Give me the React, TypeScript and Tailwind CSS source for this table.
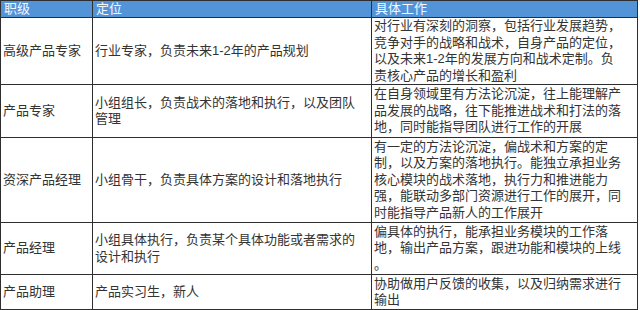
const rows = [
  {
    level: '高级产品专家',
    role: ['行业专家，负责未来1-2年的产品规划'],
    work: [
      '对行业有深刻的洞察，包括行业发展趋势，',
      '竞争对手的战略和战术，自身产品的定位，',
      '以及未来1-2年的发展方向和战术定制。负',
      '责核心产品的增长和盈利',
    ],
  },
  {
    level: '产品专家',
    role: ['小组组长，负责战术的落地和执行，以及团队', '管理'],
    work: [
      '在自身领域里有方法论沉淀，往上能理解产',
      '品发展的战略，往下能推进战术和打法的落',
      '地，同时能指导团队进行工作的开展',
    ],
  },
  {
    level: '资深产品经理',
    role: ['小组骨干，负责具体方案的设计和落地执行'],
    work: [
      '有一定的方法论沉淀，偏战术和方案的定',
      '制，以及方案的落地执行。能独立承担业务',
      '核心模块的战术落地，执行力和推进能力',
      '强，能联动多部门资源进行工作的展开，同',
      '时能指导产品新人的工作展开',
    ],
  },
  {
    level: '产品经理',
    role: ['小组具体执行，负责某个具体功能或者需求的', '设计和执行'],
    work: [
      '偏具体的执行，能承担业务模块的工作落',
      '地，输出产品方案，跟进功能和模块的上线',
      '。',
    ],
  },
  {
    level: '产品助理',
    role: ['产品实习生，新人'],
    work: ['协助做用户反馈的收集，以及归纳需求进行', '输出'],
  },
]

// row heights between the grid lines
const heights = ['h-[66px]', 'h-[52px]', 'h-[84px]', 'h-[51px]', 'h-[34px]']

function Lines({ lines }: { lines: string[] }) {
  return (
    <div>
      {lines.map((l, i) => (
        <div key={i} className="whitespace-nowrap">
          {l}
        </div>
      ))}
    </div>
  )
}

export default function App() {
  return (
    <div className="w-[640px] h-[310px] bg-white">
      <div
        className="grid w-[638px] gap-px bg-[#2e2e2e] p-px text-[13px] leading-[16.5px] text-[#333]"
        style={{ fontFamily: '"Liberation Sans", "Noto Sans CJK SC", sans-serif' }}
      >
        <div className="grid grid-cols-[91px_278px_265px] gap-px">
          <div className="h-[16px] bg-[#5393d8] pl-[3px] text-[#f4f8fd] leading-[16px]">职级</div>
          <div className="h-[16px] bg-[#5393d8] pl-[3px] text-[#f4f8fd] leading-[16px]">定位</div>
          <div className="h-[16px] bg-[#5393d8] pl-[3px] text-[#f4f8fd] leading-[16px]">具体工作</div>
        </div>
        {rows.map((r, i) => (
          <div key={r.level} className={`grid grid-cols-[91px_278px_265px] gap-px overflow-hidden ${heights[i]}`}>
            <div className="flex items-center bg-white pl-[2px]">{r.level}</div>
            <div className="flex items-center bg-white pl-[2px]">
              <Lines lines={r.role} />
            </div>
            <div className="flex items-center bg-white pl-[2px]">
              <Lines lines={r.work} />
            </div>
          </div>
        ))}
      </div>
    </div>
  )
}
